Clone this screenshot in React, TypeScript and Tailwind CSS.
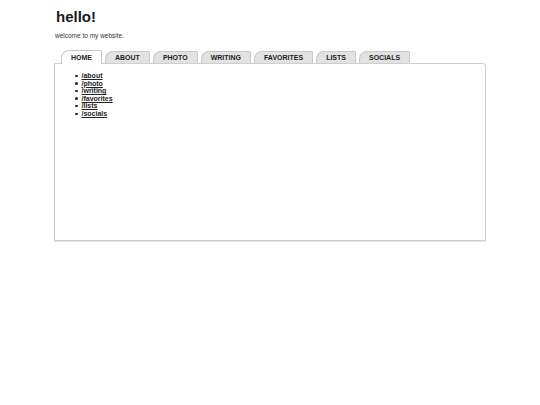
const tabs = ["HOME", "ABOUT", "PHOTO", "WRITING", "FAVORITES", "LISTS", "SOCIALS"];
const links = ["/about", "/photo", "/writing", "/favorites", "/lists", "/socials"];

export default function App() {
  return (
    <div className="min-h-[405px] w-[540px] bg-white font-['Liberation_Sans',Arial,sans-serif] text-[#222]">
      <div className="ml-[54px] w-[432px] pt-[8px]">
        {/* Header */}
        <h1 className="pl-[2px] text-[15px] font-bold leading-[17px] text-[#1a1a1a]">hello!</h1>
        <p className="mt-[7px] pl-[1px] text-[6.5px] leading-[8px] text-[#333]">welcome to my website.</p>

        {/* Tabs */}
        <div className="mt-[10px] flex h-[13px] items-end gap-[3px] pl-[7px]">
          {tabs.map((t, i) => (
            <div
              key={t}
              className={
                i === 0
                  ? "relative z-10 -mb-px flex h-[14px] items-center rounded-tl-[8px] rounded-tr-[2px] border border-b-0 border-[#c8c8c8] bg-white px-[9px] pt-[1px] text-[7px] font-bold text-[#222]"
                  : "flex h-[12px] items-center rounded-tl-[8px] rounded-tr-[2px] border border-b-0 border-[#c8c8c8] bg-[#e2e2e2] px-[9px] pt-[1px] text-[7px] font-bold text-[#222]"
              }
            >
              {t}
            </div>
          ))}
        </div>

        {/* Panel */}
        <div className="h-[178px] rounded-tr-[3px] border border-[#cfcfcf] bg-white pt-[8px] shadow-[0_1px_0_#e4e4e4]">
          <ul className="pl-[20px] text-[7px] leading-[7.6px] font-bold text-[#222]">
            {links.map((l) => (
              <li key={l} className="flex items-center">
                <span className="mr-[4px] inline-block h-[2.5px] w-[2.5px] rounded-full bg-[#222]" />
                <a href="#" className="underline">
                  {l}
                </a>
              </li>
            ))}
          </ul>
        </div>
      </div>
    </div>
  );
}
